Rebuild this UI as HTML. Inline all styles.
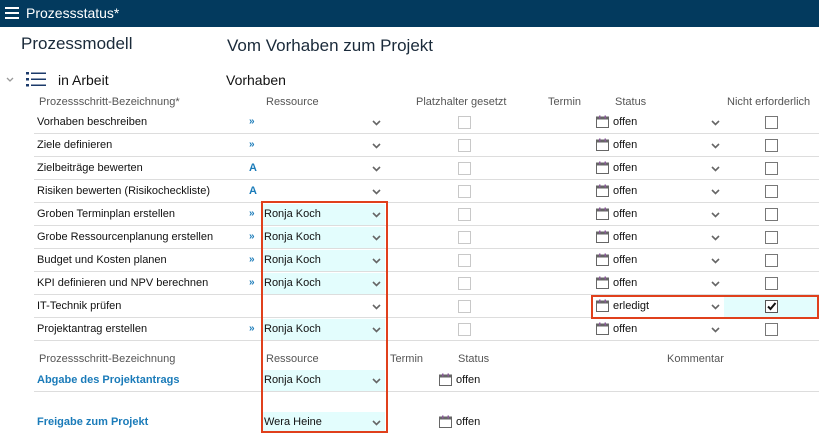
<!DOCTYPE html>
<html><head><meta charset="utf-8"><style>
*{margin:0;padding:0;box-sizing:border-box}
body{width:819px;height:437px;overflow:hidden;background:#fff;font-family:"Liberation Sans",sans-serif;color:#111;position:relative;font-size:11px}
.a{position:absolute;white-space:nowrap}
.hdr{left:0;top:0;width:819px;height:27px;background:#033a5e;color:#fff;font-size:14px;line-height:27px}
.th{color:#555;font-size:11px}
.row{position:absolute;left:34px;width:785px;height:23px;border-bottom:1px solid #ddd}
.row>*{position:absolute}
.t{left:3px;top:5px;font-size:11px}
.ar{left:215px;top:5px;color:#1a7bb9;font-weight:bold;font-size:10px}
.A{left:215px;top:5px;color:#1a7bb9;font-weight:bold;font-size:11px}
.res{left:228px;top:1px;width:123px;height:21px;background:#e3fdfd;padding:4px 0 0 2px;font-size:11px}
.ch{left:338px;top:9px}
.cb1{left:424px;top:5px;width:13px;height:13px;border:1px solid #c8c8c8}
.cal{left:562px;top:4px}
.st{left:579px;top:5px}
.ch2{left:677px;top:9px}
.cb2{left:731px;top:5px;width:13px;height:13px;border:1px solid #777}
.blue{color:#1a7bb9;font-weight:bold}
</style></head><body>
<div class="a hdr"><svg style="position:absolute;left:5px;top:7px" width="14" height="12"><rect y="0" width="14" height="2" fill="#fff"/><rect y="5" width="14" height="2" fill="#fff"/><rect y="10" width="14" height="2" fill="#fff"/></svg><span style="position:absolute;left:26px">Prozessstatus*</span></div>
<div class="a" style="left:21px;top:34px;font-size:17px;color:#1a2a3a">Prozessmodell</div>
<div class="a" style="left:227px;top:36px;font-size:17px;color:#1a2a3a">Vom Vorhaben zum Projekt</div>
<svg class="a" style="left:6px;top:77px" width="8" height="6"><path d="M1 1L4 4L7 1" stroke="#999" stroke-width="1.3" fill="none"/></svg>
<svg class="a" style="left:26px;top:71px" width="20" height="17"><g fill="#1b3a6a"><rect x="0" y="1" width="3" height="2.5"/><rect x="0" y="7" width="3" height="2.5"/><rect x="0" y="13" width="3" height="2.5"/><rect x="5" y="1.5" width="15" height="1.5"/><rect x="5" y="7.5" width="15" height="1.5"/><rect x="5" y="13.5" width="15" height="1.5"/></g></svg>
<div class="a" style="left:58px;top:72px;font-size:14px">in Arbeit</div>
<div class="a" style="left:226px;top:72px;font-size:14px">Vorhaben</div>
<div class="a th" style="left:39px;top:96px">Prozessschritt-Bezeichnung*</div>
<div class="a th" style="left:266px;top:96px">Ressource</div>
<div class="a th" style="left:416px;top:96px">Platzhalter gesetzt</div>
<div class="a th" style="left:548px;top:96px">Termin</div>
<div class="a th" style="left:615px;top:96px">Status</div>
<div class="a th" style="left:727px;top:96px">Nicht erforderlich</div>

<svg width="0" height="0" style="position:absolute"><defs>
<symbol id="c" viewBox="0 0 9 6"><path d="M1 1L4.5 4.5L8 1" stroke="#666" stroke-width="1.6" fill="none"/></symbol>
<symbol id="k" viewBox="0 0 13 13"><rect x="0.5" y="2" width="12" height="10.5" fill="none" stroke="#666"/><rect x="0.5" y="2" width="12" height="2.5" fill="#666"/><rect x="3" y="0.5" width="1.5" height="3" fill="#8a5a9a"/><rect x="8.5" y="0.5" width="1.5" height="3" fill="#8a5a9a"/></symbol>
</defs></svg>

<div class="row" style="top:111px"><span class="t">Vorhaben beschreiben</span><span class="ar">»</span><svg class="ch" width="9" height="6"><use href="#c"/></svg><span class="cb1"></span><svg class="cal" width="13" height="13"><use href="#k"/></svg><span class="st">offen</span><svg class="ch2" width="9" height="6"><use href="#c"/></svg><span class="cb2"></span></div>
<div class="row" style="top:134px"><span class="t">Ziele definieren</span><span class="ar">»</span><svg class="ch" width="9" height="6"><use href="#c"/></svg><span class="cb1"></span><svg class="cal" width="13" height="13"><use href="#k"/></svg><span class="st">offen</span><svg class="ch2" width="9" height="6"><use href="#c"/></svg><span class="cb2"></span></div>
<div class="row" style="top:157px"><span class="t">Zielbeiträge bewerten</span><span class="A">A</span><svg class="ch" width="9" height="6"><use href="#c"/></svg><span class="cb1"></span><svg class="cal" width="13" height="13"><use href="#k"/></svg><span class="st">offen</span><svg class="ch2" width="9" height="6"><use href="#c"/></svg><span class="cb2"></span></div>
<div class="row" style="top:180px"><span class="t">Risiken bewerten (Risikocheckliste)</span><span class="A">A</span><svg class="ch" width="9" height="6"><use href="#c"/></svg><span class="cb1"></span><svg class="cal" width="13" height="13"><use href="#k"/></svg><span class="st">offen</span><svg class="ch2" width="9" height="6"><use href="#c"/></svg><span class="cb2"></span></div>
<div class="row" style="top:203px"><span class="t">Groben Terminplan erstellen</span><span class="ar">»</span><span class="res">Ronja Koch</span><svg class="ch" width="9" height="6"><use href="#c"/></svg><span class="cb1"></span><svg class="cal" width="13" height="13"><use href="#k"/></svg><span class="st">offen</span><svg class="ch2" width="9" height="6"><use href="#c"/></svg><span class="cb2"></span></div>
<div class="row" style="top:226px"><span class="t">Grobe Ressourcenplanung erstellen</span><span class="ar">»</span><span class="res">Ronja Koch</span><svg class="ch" width="9" height="6"><use href="#c"/></svg><span class="cb1"></span><svg class="cal" width="13" height="13"><use href="#k"/></svg><span class="st">offen</span><svg class="ch2" width="9" height="6"><use href="#c"/></svg><span class="cb2"></span></div>
<div class="row" style="top:249px"><span class="t">Budget und Kosten planen</span><span class="ar">»</span><span class="res">Ronja Koch</span><svg class="ch" width="9" height="6"><use href="#c"/></svg><span class="cb1"></span><svg class="cal" width="13" height="13"><use href="#k"/></svg><span class="st">offen</span><svg class="ch2" width="9" height="6"><use href="#c"/></svg><span class="cb2"></span></div>
<div class="row" style="top:272px"><span class="t">KPI definieren und NPV berechnen</span><span class="ar">»</span><span class="res">Ronja Koch</span><svg class="ch" width="9" height="6"><use href="#c"/></svg><span class="cb1"></span><svg class="cal" width="13" height="13"><use href="#k"/></svg><span class="st">offen</span><svg class="ch2" width="9" height="6"><use href="#c"/></svg><span class="cb2"></span></div>
<div class="row" style="top:295px"><span class="t">IT-Technik prüfen</span><svg class="ch" width="9" height="6"><use href="#c"/></svg><span class="cb1"></span><span style="left:690px;top:1px;width:93px;height:21px;background:#e3fdfd"></span><svg class="cal" width="13" height="13"><use href="#k"/></svg><span class="st">erledigt</span><svg class="ch2" width="9" height="6"><use href="#c"/></svg><span class="cb2" style="background:#fff;border-color:#555"><svg width="11" height="11" style="position:absolute;left:0;top:0"><path d="M2 5.5L4.5 8L9.5 2" stroke="#111" stroke-width="2" fill="none"/></svg></span></div>
<div class="row" style="top:318px"><span class="t">Projektantrag erstellen</span><span class="ar">»</span><span class="res">Ronja Koch</span><svg class="ch" width="9" height="6"><use href="#c"/></svg><span class="cb1"></span><svg class="cal" width="13" height="13"><use href="#k"/></svg><span class="st">offen</span><svg class="ch2" width="9" height="6"><use href="#c"/></svg><span class="cb2"></span></div>

<div class="a th" style="left:39px;top:353px">Prozessschritt-Bezeichnung</div>
<div class="a th" style="left:266px;top:353px">Ressource</div>
<div class="a th" style="left:390px;top:353px">Termin</div>
<div class="a th" style="left:458px;top:353px">Status</div>
<div class="a th" style="left:667px;top:353px">Kommentar</div>

<div class="row" style="top:369px"><span class="t blue">Abgabe des Projektantrags</span><span class="res">Ronja Koch</span><svg class="ch" width="9" height="6"><use href="#c"/></svg><svg style="left:405px;top:4px" width="13" height="13"><use href="#k"/></svg><span style="left:422px;top:5px">offen</span></div>
<div class="row" style="top:411px;border-bottom:none"><span class="t blue">Freigabe zum Projekt</span><span class="res">Wera Heine</span><svg class="ch" width="9" height="6"><use href="#c"/></svg><svg style="left:405px;top:4px" width="13" height="13"><use href="#k"/></svg><span style="left:422px;top:5px">offen</span></div>

<div class="a" style="left:261px;top:201px;width:127px;height:232px;border:2px solid #e0401c"></div>
<div class="a" style="left:591px;top:295px;width:228px;height:24px;border:2px solid #e0401c"></div>
</body></html>
